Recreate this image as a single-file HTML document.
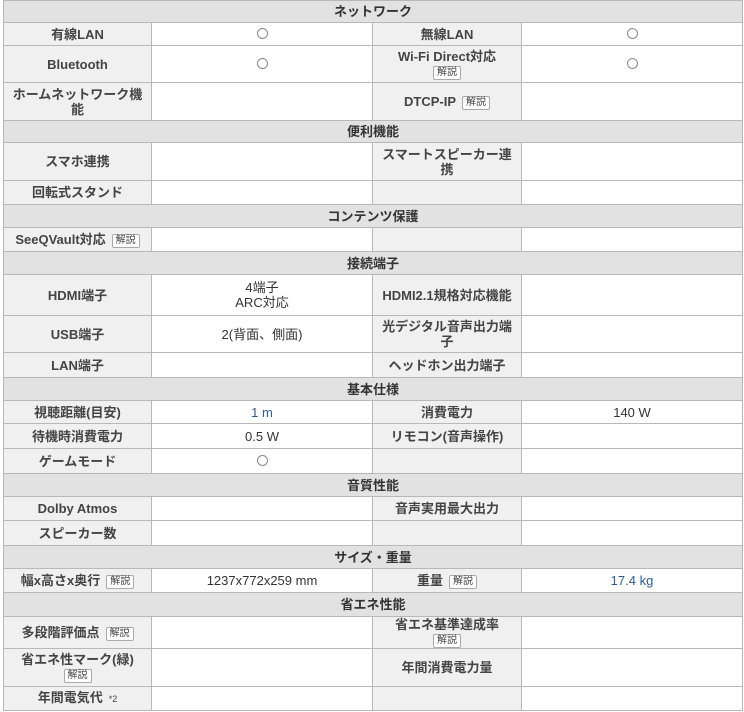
<!DOCTYPE html>
<html><head><meta charset="utf-8"><style>
body{margin:0;background:#fff;}
table{position:absolute;left:3px;top:0;border-collapse:collapse;table-layout:fixed;width:739px;font-family:"Liberation Sans","Noto Sans CJK JP",sans-serif;font-size:13px;color:#333;}
td{border:1px solid #b8b8b8;text-align:center;padding:0 2px;line-height:15px;overflow:hidden;}
td.h{background:#e2e2e2;font-weight:bold;}
td.l{background:#f0f0f0;font-weight:bold;color:#444}
td.v{background:#fff;}
.b{color:#2b5c9a}
.k{display:inline-block;border:1px solid #aaa;border-radius:2px;font-size:10px;line-height:12px;padding:0 3px;font-weight:normal;background:#fff;margin-left:6px;vertical-align:1px}
.k2{margin-left:0}
.o{display:inline-block;width:9px;height:9px;border:1px solid #888;border-radius:50%}
small{font-size:9px;font-weight:normal;margin-left:6px}
</style></head><body>
<table>
<colgroup><col style="width:148px"><col style="width:221px"><col style="width:149px"><col style="width:221px"></colgroup>
<tr style="height:22px"><td class="h" colspan="4">ネットワーク</td></tr>
<tr style="height:23px"><td class="l">有線LAN</td><td class="v"><span class="o"></span></td><td class="l">無線LAN</td><td class="v"><span class="o"></span></td></tr>
<tr style="height:37px"><td class="l">Bluetooth</td><td class="v"><span class="o"></span></td><td class="l">Wi-Fi Direct対応<br><span class="k k2">解説</span></td><td class="v"><span class="o"></span></td></tr>
<tr style="height:38px"><td class="l">ホームネットワーク機<br>能</td><td class="v"></td><td class="l">DTCP-IP<span class="k">解説</span></td><td class="v"></td></tr>
<tr style="height:22px"><td class="h" colspan="4">便利機能</td></tr>
<tr style="height:38px"><td class="l">スマホ連携</td><td class="v"></td><td class="l">スマートスピーカー連<br>携</td><td class="v"></td></tr>
<tr style="height:24px"><td class="l">回転式スタンド</td><td class="v"></td><td class="l"></td><td class="v"></td></tr>
<tr style="height:23px"><td class="h" colspan="4">コンテンツ保護</td></tr>
<tr style="height:24px"><td class="l">SeeQVault対応<span class="k">解説</span></td><td class="v"></td><td class="l"></td><td class="v"></td></tr>
<tr style="height:23px"><td class="h" colspan="4">接続端子</td></tr>
<tr style="height:41px"><td class="l">HDMI端子</td><td class="v">4端子<br>ARC対応</td><td class="l">HDMI2.1規格対応機能</td><td class="v"></td></tr>
<tr style="height:37px"><td class="l">USB端子</td><td class="v">2(背面、側面)</td><td class="l">光デジタル音声出力端<br>子</td><td class="v"></td></tr>
<tr style="height:25px"><td class="l">LAN端子</td><td class="v"></td><td class="l">ヘッドホン出力端子</td><td class="v"></td></tr>
<tr style="height:23px"><td class="h" colspan="4">基本仕様</td></tr>
<tr style="height:23px"><td class="l">視聴距離(目安)</td><td class="v b">1 m</td><td class="l">消費電力</td><td class="v">140 W</td></tr>
<tr style="height:25px"><td class="l">待機時消費電力</td><td class="v">0.5 W</td><td class="l">リモコン(音声操作)</td><td class="v"></td></tr>
<tr style="height:25px"><td class="l">ゲームモード</td><td class="v"><span class="o"></span></td><td class="l"></td><td class="v"></td></tr>
<tr style="height:23px"><td class="h" colspan="4">音質性能</td></tr>
<tr style="height:24px"><td class="l">Dolby Atmos</td><td class="v"></td><td class="l">音声実用最大出力</td><td class="v"></td></tr>
<tr style="height:25px"><td class="l">スピーカー数</td><td class="v"></td><td class="l"></td><td class="v"></td></tr>
<tr style="height:23px"><td class="h" colspan="4">サイズ・重量</td></tr>
<tr style="height:24px"><td class="l">幅x高さx奥行<span class="k">解説</span></td><td class="v">1237x772x259 mm</td><td class="l">重量<span class="k">解説</span></td><td class="v b">17.4 kg</td></tr>
<tr style="height:24px"><td class="h" colspan="4">省エネ性能</td></tr>
<tr style="height:32px"><td class="l">多段階評価点<span class="k">解説</span></td><td class="v"></td><td class="l">省エネ基準達成率<br><span class="k k2">解説</span></td><td class="v"></td></tr>
<tr style="height:38px"><td class="l">省エネ性マーク(緑)<br><span class="k k2">解説</span></td><td class="v"></td><td class="l">年間消費電力量</td><td class="v"></td></tr>
<tr style="height:24px"><td class="l">年間電気代<small>*2</small></td><td class="v"></td><td class="l"></td><td class="v"></td></tr>
</table>
</body></html>
